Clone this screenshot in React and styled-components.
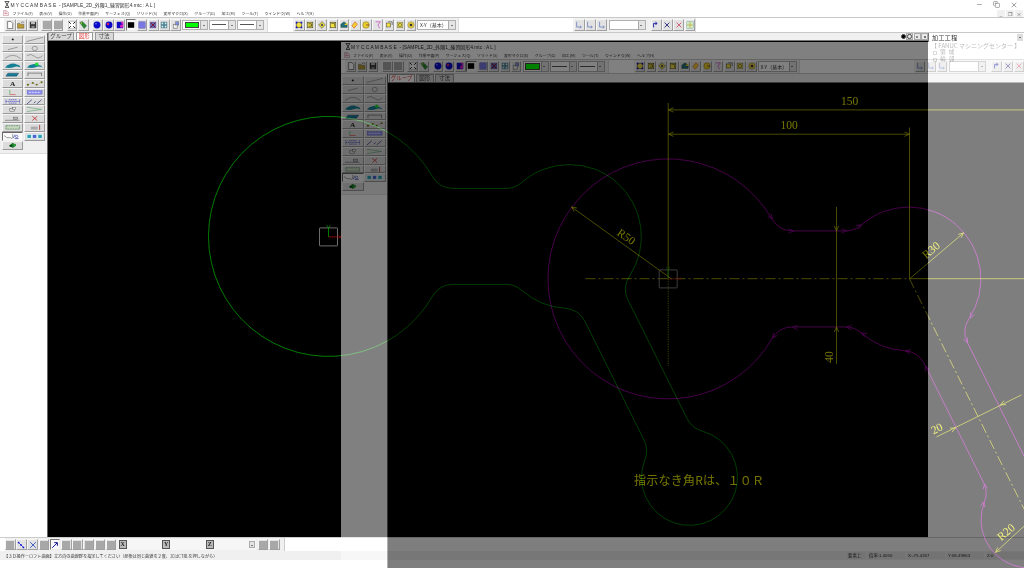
import React from 'react';
import styled, { createGlobalStyle } from 'styled-components';
import { Minus, Copy, X as CloseIcon } from 'lucide-react';

const Global = createGlobalStyle`
  html, body { margin: 0; padding: 0; background: #fff; overflow: hidden; }
  #root { width: 1024px; height: 568px; }
`;

const Stage = styled.div`
  position: relative; width: 1024px; height: 568px; overflow: hidden; background: #fff;
  filter: blur(0.4px);
  font-family: "Noto Sans CJK JP", "Liberation Sans", sans-serif;
`;
const Win = styled.div`
  width: 1024px; height: 568px; display: flex; flex-direction: column; background: #fff; color: #222;
`;
const Ghost = styled.div`
  position: absolute; left: 340.5px; top: 41.5px; width: 1024px; height: 568px; opacity: 0.5;
  box-shadow: inset 1px 1px 0 #666;
`;

const TitleBar = styled.div`
  height: 9px; display: flex; align-items: center; padding-left: 4px; position: relative;
`;
const TitleText = styled.span`
  font-size: 4.9px; color: #333; margin-left: 0.5px; white-space: pre; font-family: "Liberation Sans", "Noto Sans CJK JP", sans-serif;
`;
const WinControls = styled.div`
  position: absolute; right: 6px; top: 0; height: 9px; display: flex; gap: 10px; align-items: center; color: #333;
`;
const MenuBar = styled.div`
  height: 8px; display: flex; align-items: center; padding-left: 3px; position: relative;
`;
const MenuItems = styled.div`
  display: flex; gap: 6.4px; margin-left: 3.5px;
`;
const MenuItem = styled.span`
  font-size: 3.92px; line-height: 8px; color: #333; white-space: nowrap;
`;
const MdiControls = styled.div`
  position: absolute; right: 1px; top: 0.5px; display: flex; gap: 1px;
`;
const MdiBtn = styled.span`
  width: 8px; height: 7px; background: #f0f0f0; color: #555; font-size: 5px; line-height: 7px; text-align: center;
`;
const Toolbar = styled.div`
  height: 13.5px; display: flex; border-top: 1px solid #c8c8c8; border-bottom: 1px solid #c8c8c8; padding-left: 4px; background: #fff;
`;
const Segment = styled.div`
  display: flex; align-items: center; background: #f0f0f0; flex: none; width: ${p => p.$w}px; padding-left: 1px; box-sizing: border-box;
  margin-left: ${p => p.$ml || 0}px; border-right: 1px solid #ddd;
`;
const Group = styled.div`
  display: flex; gap: 0.6px; margin-left: ${p => p.$ml || 0}px; flex: none;
`;
const Btn = styled.div`
  width: 10.6px; height: 11.5px; box-sizing: border-box; background: ${p => p.$pressed ? '#f8f8f8' : '#e2e2e2'};
  border: 0.6px solid; border-color: ${p => p.$pressed ? '#777 #eee #eee #777' : '#f6f6f6 #a0a0a0 #a0a0a0 #f6f6f6'};
  display: flex; align-items: center; justify-content: center; flex: none;
  svg { width: 8px; height: 8px; display: block; }
`;
const Combo = styled.div`
  width: ${p => p.$w}px; height: 10.5px; box-sizing: border-box; background: #fff; margin-left: ${p => p.$ml || 0}px; border: 0.6px solid #b0b0b0;
  display: flex; align-items: center; padding-left: 1.5px; flex: none; font-size: 5px; color: #333; white-space: nowrap; overflow: hidden;
`;
const ComboBody = styled.div`
  flex: 1; min-width: 0; display: flex; align-items: center; overflow: hidden;
`;
const Swatch = styled.div`
  height: 6.5px; width: 100%; margin-right: 1px; background: #00ff00; border: 0.6px solid #444; box-sizing: border-box;
`;
const LineSample = styled.div`
  height: 0; width: 100%; margin-right: 2px; border-top: 0.8px solid #555;
`;
const ComboArrow = styled.div`
  width: 6px; align-self: stretch; flex: none; background: #e4e4e4; border-left: 0.5px solid #aaa; position: relative;
  &::after { content: ''; position: absolute; left: 1.5px; top: 4px; border: 1.4px solid transparent; border-top: 1.8px solid #111; }
`;
const Main = styled.div`
  flex: 1; min-height: 0; display: flex;
`;
const Side = styled.div`
  width: 46.5px; flex: none; border-right: 0.8px solid #666; box-sizing: content-box; background: #fff;
`;
const ToolGrid = styled.div`
  height: 121px; box-sizing: border-box; padding: 2.2px 1px 0 1.5px; background: #f0f0f0; border-bottom: 1px solid #ddd;
  display: grid; grid-template-columns: 21.5px 21.5px; grid-auto-rows: 8.85px; column-gap: 0.5px;
`;
const ToolBtn = styled.div`
  background: ${p => p.$pressed ? '#fafafa' : '#dcdcdc'};
  border: 0.5px solid; border-color: ${p => p.$pressed ? '#666 #eee #eee #666' : '#f5f5f5 #999 #999 #f5f5f5'};
  box-sizing: border-box; display: flex;
  svg { width: 100%; height: 100%; display: block; }
`;
const Center = styled.div`
  flex: 1; min-width: 0; display: flex; flex-direction: column;
`;
const TabRow = styled.div`
  height: 8.6px; background: #f0f0f0; display: flex; align-items: flex-end; flex: none; position: relative; padding-left: 0.5px; gap: 1.5px;
  border-bottom: 0.6px solid #777; box-sizing: border-box;
`;
const Tab = styled.div`
  width: ${p => p.$w}px; height: 8px; box-sizing: border-box; text-align: center; font-size: 5.5px; line-height: 7.5px; white-space: nowrap; overflow: hidden;
  background: ${p => p.$on ? '#fff' : '#d8d8d8'}; color: ${p => p.$on ? '#e04040' : '#444'};
  border: 0.6px solid #999; border-bottom: 0; border-radius: 1px 1px 0 0;
`;
const TabTools = styled.div`
  position: absolute; right: 0; top: 0.5px; display: flex; gap: 0.5px; align-items: center;
`;
const MiniToggle = styled.div`
  width: 7px; height: 7px; background: #e8e8e8; border: 0.5px solid #aaa; box-sizing: border-box; display: flex; align-items: center; justify-content: center;
`;
const Dot = styled.span`
  display: block; width: ${p => p.$s}px; height: ${p => p.$s}px; border-radius: 50%; background: ${p => p.$fill ? '#000' : 'transparent'}; border: 0.5px solid #444; box-sizing: border-box;
`;
const Canvas = styled.div`
  flex: 1; min-height: 0; background: #000;
  svg { width: 100%; height: 100%; display: block; }
`;
const RightPanel = styled.div`
  width: 96px; flex: none; background: #fff;
`;
const PanelCombo = styled.div`
  height: 8.5px; margin-top: 0.5px; display: flex; align-items: center; border-left: 0.6px solid #777; font-size: 6px; letter-spacing: 0.4px; padding-left: 3px; justify-content: space-between; color: #333;
`;
const PanelArrow = styled.span`
  width: 6px; height: 7px; margin-right: 1px; background: #ddd; position: relative;
  &::after { content: ''; position: absolute; left: 1.5px; top: 3px; border: 1.4px solid transparent; border-top: 1.8px solid #111; }
`;
const TreeRoot = styled.div`
  font-size: 6px; line-height: 7.5px; color: #777; padding-left: 3px; white-space: nowrap;
`;
const TreeItem = styled.div`
  font-size: 5.6px; line-height: 7px; letter-spacing: 1px; color: #777; padding-left: 5px; display: flex; align-items: center; gap: 3px;
`;
const TreePlus = styled.span`
  width: 4px; height: 4px; border: 0.5px solid #bbb; box-sizing: border-box;
`;
const BottomBar = styled.div`
  height: 14px; flex: none; display: flex; padding-left: 5px; box-sizing: border-box; border-top: 0.8px solid #ccc; background: #fff;
`;
const BottomSeg = styled.div`
  width: 280px; display: flex; align-items: center; background: #f0f0f0; border-right: 0.8px solid #ccc; box-sizing: border-box;
`;
const CoordField = styled.div`
  width: 138px; height: 10.5px; margin-left: 1.5px; display: flex; background: #f6f6f6; box-sizing: border-box; flex: none; align-items: center; position: relative; padding-left: 1px; gap: 35.5px;
`;
const CoordTag = styled.span`
  width: 8px; height: 8.5px; box-sizing: border-box; background: #bbb; border: 0.6px solid #555; font: bold 6px/7.5px "Liberation Serif", serif; text-align: center; color: #222; flex: none;
`;
const CoordArrow = styled.span`
  position: absolute; right: 1px; top: 1.5px; width: 6px; height: 7.5px; background: #e4e4e4; border: 0.4px solid #aaa; box-sizing: border-box;
  &::after { content: ''; position: absolute; left: 1.3px; top: 3px; border: 1.3px solid transparent; border-top: 1.6px solid #111; }
`;
const StatusBar = styled.div`
  height: 9px; flex: none; background: #f0f0f0; display: flex; align-items: center; padding-left: 4px;
`;
const StatusText = styled.span`
  font-size: 4.16px; color: #333; white-space: nowrap;
`;
const StatusFields = styled.div`
  margin-left: auto; display: flex; height: 100%; flex: none;
`;
const StatusField = styled.div`
  width: ${p => p.$w}px; margin-right: ${p => p.$mr || 0}px; font-size: 4.4px; line-height: 7.5px; height: 7.5px; align-self: center; background: #e8e8e8; padding-left: 1px; box-sizing: border-box; color: #333; white-space: nowrap; font-family: "Liberation Sans", "Noto Sans CJK JP", sans-serif;
`;
const Footer = styled.div`
  height: 8px; flex: none; background: #fff;
`;

/* ---------- toolbar icons ---------- */
const stroke = { fill: 'none', strokeWidth: 0.8 };
const yellowBox = c => <><rect x="1.5" y="1.5" width="7" height="7" fill="#f0e040" stroke="#222" strokeWidth="0.6" />{c}</>;
const TB = {
  file: <path d="M2 .6h4l2.4 2.4v6.4H2z" fill="#fff" stroke="#333" strokeWidth=".7" />,
  folder: <><path d="M.6 3h3l1 1h4v5H.6z" fill="#b89a30" stroke="#444" strokeWidth=".5" /><path d="M5 2l2-1 2 1" stroke="#333" fill="none" strokeWidth=".6" /></>,
  save: <><rect x="1" y="1" width="8" height="8" fill="#333" /><rect x="2.5" y="1" width="5" height="3" fill="#bbb" /><rect x="3" y="6" width="4" height="3" fill="#888" /></>,
  blank: <rect x="-1" y="-1" width="12" height="12" fill="#a8a8a8" />,
  fit: <><rect x="0.5" y="0.5" width="9" height="9" fill="#fff" stroke="#999" strokeWidth=".5" /><path d="M1 1l2.5 2.5M9 1L6.5 3.5M1 9l2.5-2.5M9 9L6.5 6.5" stroke="#111" strokeWidth="1.2" /></>,
  tag: <><path d="M1 2l3-1.5L9.5 6 6.5 9.5z" fill="#2a8a2a" stroke="#143" strokeWidth=".5" /><circle cx="3" cy="2.5" r=".8" fill="#dd3" /></>,
  sphere: <><circle cx="5" cy="5" r="4.3" fill="#0808c8" /><circle cx="3.7" cy="3.5" r="1" fill="#9090ff" /></>,
  sphereR: <><circle cx="5" cy="5" r="4.3" fill="#0808c8" /><circle cx="3.7" cy="3.7" r="1.6" fill="#e02060" /></>,
  shade: <><rect x="1" y="1" width="8" height="8" fill="#1010c0" /><path d="M5.5 1h3.5v5z" fill="#e020c0" /><circle cx="7" cy="6.5" r="2" fill="#e020c0" /></>,
  black: <rect x="1" y="1.5" width="8" height="7" fill="#000" />,
  blue: <><rect x="1" y="1" width="8" height="8" fill="#7878e0" stroke="#5050a0" strokeWidth=".5" /></>,
  xbox: <><rect x="1" y="1" width="8" height="8" fill="#6868b0" /><path d="M2 2l6 6M8 2l-6 6" stroke="#801030" strokeWidth="1.2" /></>,
  grid: <><rect x="1" y="1" width="8" height="8" fill="#508090" /><path d="M2 2h2v2H2zM6 2h2v2H6zM2 6h2v2H2zM6 6h2v2H6z" fill="#d0f0f0" /></>,
  stack: <><rect x="1.5" y="4" width="5" height="5" fill="#eee" stroke="#555" strokeWidth=".6" /><rect x="4.5" y="1" width="4" height="4" fill="#8090e0" stroke="#555" strokeWidth=".5" /></>,
  y1: yellowBox(<path d="M1 1h2v2H1zM7 1h2v2H7zM1 7h2v2H1zM7 7h2v2H7z" fill="#1010c0" />),
  y2: yellowBox(<path d="M3 3.5h4v3H3" {...stroke} stroke="#222" />),
  y3: <><path d="M5 .8L9.2 5 5 9.2.8 5z" fill="#f0e040" stroke="#333" strokeWidth=".6" /><circle cx="5" cy="5" r="1.5" fill="#555" /></>,
  y4: yellowBox(<path d="M3 3h4v4" {...stroke} stroke="#443" />),
  s1: <><path d="M1 4l4-3 4 3v4H1z" fill="#20707a" stroke="#222" strokeWidth=".4" /><path d="M5 5l4-3v3z" fill="#e8c820" /></>,
  s2: <><path d="M5 1l3 3-4 5-3-3z" fill="#f0d030" stroke="#d03020" strokeWidth=".6" /></>,
  s3: <><circle cx="5" cy="5" r="4" fill="#e8d030" stroke="#806000" strokeWidth=".6" /><path d="M5 5h4" stroke="#803030" strokeWidth="1" /></>,
  s4: <><path d="M2 1h6L5 5l2 4" fill="none" stroke="#d070d0" strokeWidth="1.2" /></>,
  s5: <><rect x="2" y="2.5" width="5" height="5" fill="#f0e040" stroke="#333" strokeWidth=".6" /><path d="M4 1h5v4" fill="none" stroke="#444" strokeWidth=".8" /></>,
  s6: <><rect x="1.5" y="1.5" width="7" height="7" fill="#f0e040" stroke="#666" strokeWidth=".6" /><rect x="3.5" y="3.5" width="3" height="3" fill="none" stroke="#333" strokeWidth=".6" /></>,
  s7: <><circle cx="5" cy="5" r="4" fill="#f0d840" stroke="#555" strokeWidth=".5" /><rect x="3.5" y="3.5" width="3" height="3" fill="#333" /></>,
  l1: <path d="M2 1v6.5h5.5M6 6l2 1.5-2 1.5" fill="none" stroke="#7080c0" strokeWidth="1" />,
  nav: <path d="M1.5 8.5L7.5 2.5M4 2h4v4" fill="none" stroke="#101090" strokeWidth="1.2" />,
  cross: <path d="M1.5 1.5l7 7M8.5 1.5l-7 7" stroke="#2040c0" strokeWidth="1" />,
  redx: <path d="M2 2l6 6M8 2l-6 6" stroke="#d04060" strokeWidth="1" />,
  gridGreen: <><rect x="1" y="1" width="8" height="8" fill="#cfe8c0" stroke="#7aa" strokeWidth=".5" /><path d="M5 1v8M1 5h8" stroke="#c0a020" strokeWidth=".7" /></>,
  points: <><path d="M2 2l6 6" stroke="#1010c0" strokeWidth=".8" /><circle cx="2" cy="2" r="1.1" fill="#1010e0" /><circle cx="8" cy="8" r="1.1" fill="#1010e0" /><circle cx="5" cy="5" r="1.1" fill="#1010e0" /></>,
  xcross: <path d="M2 2l6 6M8 2l-6 6" stroke="#303080" strokeWidth="1.2" />,
  arrowUp: <path d="M2 8V3h4l-1.5-2M6 3L4.5 5" fill="none" stroke="#1010a0" strokeWidth="1.1" />,
};
const Ico = ({ k, pressed }) => (
  <Btn $pressed={pressed}><svg viewBox="0 0 10 10">{TB[k]}</svg></Btn>
);
const Icons = ({ list, ml, pressed }) => (
  <Group $ml={ml}>{list.map((k, i) => <Ico key={i} k={k} pressed={k === pressed} />)}</Group>
);

/* ---------- side tool icons ---------- */
const g = '#777';
const SIDE = [
  <circle cx="10" cy="4" r="1" fill="#111" />,
  <path d="M1.5 6.5L18.5 1.5" stroke={g} strokeWidth=".7" />,
  <path d="M5 5.5L15 2.5" stroke={g} strokeWidth=".7" />,
  <circle cx="10" cy="4" r="2.6" fill="none" stroke={g} strokeWidth=".7" />,
  <path d="M2 6.5Q10-1 18 6.5" fill="none" stroke={g} strokeWidth=".7" />,
  <path d="M2 3Q6 0 10 4t8-1" fill="none" stroke={g} strokeWidth=".7" />,
  <path d="M2 6.5Q4 3 8 2t6 1q3 0 4 3.5q-4-2-7-.5T2 6.5z" fill="#157f95" />,
  <><path d="M2 6.5Q4 3 8 2.5t6 1q3 0 4 3q-4-2-7-.5T2 6.5z" fill="#157f95" /><circle cx="12" cy="2.5" r="1.8" fill="#22dd33" /></>,
  <><path d="M5 2.5h11l-2 3.5H3z" fill="#157f95" stroke="#124" strokeWidth=".4" /></>,
  <path d="M3 2v4M17 2v4M3 2.5h14" fill="none" stroke="#555" strokeWidth=".7" />,
  <text x="10" y="6.8" fontSize="7.5" fontWeight="700" textAnchor="middle" fill="#222" fontFamily="Liberation Serif, serif">A</text>,
  <><path d="M2 6l5-2.5 5 2 6-3.5" fill="none" stroke="#777" strokeWidth=".4" strokeDasharray="1 1" /><circle cx="3" cy="5.6" r="1.1" fill="#6a6a10" /><circle cx="8" cy="3.4" r="1.1" fill="#6a6a10" /><circle cx="12" cy="5.4" r="1.1" fill="#6a6a10" /><circle cx="17" cy="2.6" r="1.1" fill="#6a6a10" /></>,
  <><path d="M7 1v5.5" fill="none" stroke="#40b040" strokeWidth=".7" /><path d="M7 6.5h6" stroke="#e04040" strokeWidth=".7" /></>,
  <><rect x="2.5" y="2" width="15" height="4" fill="#9090f0" stroke="#5050c0" strokeWidth=".5" /><path d="M4 4h12" stroke="#fff" strokeWidth=".7" strokeDasharray="2 1" /></>,
  <><path d="M3 1.5v5M17 1.5v5M3 4h14M6 2h8M6 6h8" fill="none" stroke="#5050c0" strokeWidth=".8" strokeDasharray="1.6 .5" /></>,
  <path d="M2 7l5-5M9 6l2-2M12 7l5-5" fill="none" stroke="#303080" strokeWidth=".8" />,
  <><rect x="7" y="3" width="5" height="3.5" fill="#ddd" stroke="#555" strokeWidth=".5" /><rect x="10" y="1.5" width="3" height="2.5" fill="#eee" stroke="#555" strokeWidth=".5" /></>,
  <path d="M2 1.5L17 4 2 6.5" fill="none" stroke="#60a870" strokeWidth=".7" />,
  <><path d="M2 6.2h15" stroke="#666" strokeWidth=".7" /><rect x="11" y="2.5" width="4" height="3" fill="#bbb" stroke="#555" strokeWidth=".5" /></>,
  <path d="M7.5 1.5l5 5M12.5 1.5l-5 5" stroke="#c03030" strokeWidth=".9" />,
  <><rect x="3" y="2" width="14" height="4" fill="#c8d8c0" stroke="#2a6a3a" strokeWidth=".6" strokeDasharray="2 .6" /></>,
  <><rect x="6" y="3" width="7" height="3.5" fill="#aaa" /><path d="M15 1v6" stroke="#a03030" strokeWidth=".9" /></>,
  <><path d="M1 3l3 2.5h4M10 1v4q0 1.5-2 1.5" fill="none" stroke="#555" strokeWidth=".6" /><path d="M10.5 6l2-4M12 6.5h4" stroke="#2030a0" strokeWidth=".7" /><circle cx="14" cy="4" r="1.3" fill="none" stroke="#2030a0" strokeWidth=".6" /></>,
  <><rect x="1.5" y="1.5" width="17" height="5" fill="#d8f0f8" /><rect x="2.5" y="2.2" width="3.6" height="3.6" fill="#2aa0b0" /><rect x="8" y="2.2" width="3.6" height="3.6" fill="#5060d0" /><rect x="13.6" y="2.2" width="3.6" height="3.6" fill="#2aa0b0" /></>,
  <><path d="M6.5 4l3.5-3 3.5 3-3.5 3z" fill="#1a7a2a" /><circle cx="8" cy="4.5" r="1.4" fill="#0a4a1a" /><circle cx="12" cy="3.5" r="1.4" fill="#2a9a3a" /></>,
];

/* ---------- CAD drawing, authored in page coordinates ---------- */
const PROFILE = 'M103.9 -60A24 24 0 0 0 124.7 -48L177.5 -48A24 24 0 0 0 193.4 -54A72 72 0 0 1 301 39.75A24 24 0 0 0 299.5 63.7L358.6 182.3A24 24 0 0 0 373.7 194.7A48 48 0 1 1 316.4 223.3A24 24 0 0 0 315.6 203.7L256.5 85.1A24 24 0 0 0 236.5 71.85A72 72 0 0 1 193.4 54A24 24 0 0 0 177.5 48L124.7 48A24 24 0 0 0 103.9 60A120 120 0 1 1 103.9 -60Z';

const Origin = ({ x, y, box }) => (
  <g transform={`translate(${x} ${y})`} fill="none">
    <rect x="-9" y="-9" width="18" height="18" rx=".6" stroke={box} strokeWidth=".8" />
    <path d="M0 0V-9" stroke="#00b000" strokeWidth=".7" />
    <path d="M-2 -12l2 3 2-3" stroke="#00b000" strokeWidth=".6" />
    <path d="M0 0H10" stroke="#c01010" strokeWidth=".7" />
    <path d="M10 -1.5l3 3M13 -1.5l-3 3" stroke="#c01010" strokeWidth=".6" />
  </g>
);

const Chev = ({ x, y, a, c }) => (
  <path d="M-5 -2.2L0 0L-5 2.2" fill="none" stroke={c} strokeWidth=".7" transform={`translate(${x} ${y}) rotate(${a})`} />
);
const PINK_ARROWS = [
  [772, 218, 50], [793, 230, 0], [846, 230, 0], [861, 224, -30], [970, 317, 115], [967, 342, 65],
  [984, 483, -100], [983, 501, -80], [792, 326.5, 180], [846, 326.5, 180], [861, 332, 210], [905, 350, 190], [925, 365, 250], [772, 337, 130],
];
const Y = '#d8d800';
const DimText = styled.text`
  font-family: "Liberation Serif", serif; font-size: ${p => p.$s || 11.5}px; fill: #e8e800;
`;
const Note = styled.text`
  font-family: "Noto Sans CJK JP", sans-serif; font-size: 12px; fill: #e8e800; letter-spacing: 0.25px;
`;

const BaseDrawing = () => (
  <g transform="translate(-47 -40.6)" fill="none">
    <path d={PROFILE} transform="translate(327.5 236)" stroke="#009c00" strokeWidth=".8" />
    <Origin x={327.5} y={236.5} box="#888" />
  </g>
);
const GhostDrawing = () => (
  <g transform="translate(-387.5 -82.1)" fill="none">
    <path d={PROFILE} transform="translate(667.5 278)" stroke="#b000b8" strokeWidth=".8" />
    {PINK_ARROWS.map(([x, y, a], i) => <Chev key={i} x={x} y={y} a={a} c="#b000b8" />)}
    <g stroke={Y} strokeWidth=".7">
      <path d="M667.7 102V278" />
      <path d="M667.7 278V365" strokeDasharray="1.2 1.2" strokeWidth=".6" />
      <path d="M668 109H1030M668 133.3H909M909 126.7V278" />
      <path d="M585 277.8H909" strokeDasharray="10 3 2 3" />
      <path d="M909 277.8H1030" />
      <path d="M836 206V363" />
      <path d="M909 278L1030 521" strokeDasharray="10 3 2 3" />
      <path d="M671 278L571 206M909 278L963 232M936 436L1021 394M995 551.5L1026 523" />
    </g>
    <Chev x={668} y={109} a={180} c={Y} />
    <Chev x={668} y={133.3} a={180} c={Y} />
    <Chev x={909} y={133.3} a={0} c={Y} />
    <Chev x={571} y={206} a={216} c={Y} />
    <Chev x={963} y={232} a={-40} c={Y} />
    <Chev x={836} y={230} a={90} c={Y} />
    <Chev x={836} y={326} a={-90} c={Y} />
    <Chev x={955} y={427} a={-27} c={Y} />
    <Chev x={1000} y={404} a={153} c={Y} />
    <Chev x={995} y={551.5} a={137} c={Y} />
    <Origin x={667.7} y={278} box="#999" />
    <DimText x="849" y="104.5" textAnchor="middle">150</DimText>
    <DimText x="788.5" y="128.5" textAnchor="middle">100</DimText>
    <DimText textAnchor="middle" transform="translate(623.5 239) rotate(35)">R50</DimText>
    <DimText textAnchor="middle" transform="translate(933 252) rotate(-41)">R30</DimText>
    <DimText textAnchor="middle" transform="translate(832 356) rotate(-90)">40</DimText>
    <DimText textAnchor="middle" transform="translate(938 431) rotate(-27)">20</DimText>
    <DimText textAnchor="middle" transform="translate(1008 534) rotate(-41)">R20</DimText>
    <Note x="633.5" y="484">指示なき角Rは、１０Ｒ</Note>
  </g>
);

const MENU = ['ファイル(F)', '表示(V)', '操作(O)', '作業平面(P)', 'サーフェス(Q)', 'ソリッド(S)', '変形マクロ(X)', 'グループ(G)', '加工(M)', 'ツール(T)', 'ウィンドウ(W)', 'ヘルプ(H)'];

const Logo = () => (
  <svg width="6" height="7" viewBox="0 0 9 8" preserveAspectRatio="none"><path d="M1 .5h7M1.5 7.5h6M2 1l5 6M7 1L2 7" stroke="#222" strokeWidth="1" fill="none" /></svg>
);
const MenuGlyph = () => (
  <svg width="6" height="6" viewBox="0 0 6 6"><path d="M.5 .5h3l2 2v3h-5z" fill="#f6f0f0" stroke="#c08090" strokeWidth=".5" /><path d="M1.5 2h2M1.5 3.5h3" stroke="#c04060" strokeWidth=".5" /></svg>
);
const LineCombo = ({ w, ml }) => (
  <Combo $w={w} $ml={ml}><ComboBody><LineSample /></ComboBody><ComboArrow /></Combo>
);

/* `offscreen` holds the parts of a window that fall outside the page when it is
   dragged to the right and down, as the ghost window is. */
const AppWindow = ({ activeTab, children, offscreen = true }) => (
  <Win>
    <TitleBar>
      <Logo />
      <TitleText>{'M Y C C A M B A S E  - [SAMPLE_2D_外隈1_練習図形4.mtc : A L ]'}</TitleText>
      {offscreen && (
        <WinControls>
          <Minus size={7} strokeWidth={1.4} />
          <Copy size={7} strokeWidth={1.4} />
          <CloseIcon size={8} strokeWidth={1.4} />
        </WinControls>
      )}
    </TitleBar>
    <MenuBar>
      <MenuGlyph />
      <MenuItems>{MENU.map(m => <MenuItem key={m}>{m}</MenuItem>)}</MenuItems>
      {offscreen && <MdiControls><MdiBtn>_</MdiBtn><MdiBtn>❐</MdiBtn><MdiBtn>×</MdiBtn></MdiControls>}
    </MenuBar>
    <Toolbar>
      <Segment $w={264}>
        <Icons list={['file', 'folder', 'save']} />
        <Icons ml={3.5} list={['blank', 'blank']} />
        <Icons ml={3.5} list={['fit', 'tag']} />
        <Icons ml={3.5} pressed="black" list={['sphere', 'sphereR', 'shade', 'black', 'blue', 'xbox', 'grid', 'stack']} />
        <Combo $w={26} $ml={1.5}><ComboBody><Swatch /></ComboBody><ComboArrow /></Combo>
        <LineCombo w={27} ml={1} />
        <LineCombo w={27} ml={1} />
      </Segment>
      <Segment $w={166} $ml={25}>
        <Icons list={['y1', 'y2', 'y3', 'y4', 's1', 's2', 's3', 's4', 's5', 's6', 's7']} />
        <Combo $w={39} $ml={1}><ComboBody>X-Y（基本）</ComboBody><ComboArrow /></Combo>
      </Segment>
      <Segment $w={123} $ml={114}>
        <Icons list={['l1', 'l1', 'l1']} />
        <Combo $w={37} $ml={2}><ComboBody /><ComboArrow /></Combo>
        <Icons ml={5} list={['arrowUp', 'xcross', 'redx', 'gridGreen']} />
      </Segment>
    </Toolbar>
    <Main>
      <Side>
        <ToolGrid>
          {SIDE.map((s, i) => <ToolBtn key={i} $pressed={i === 22}><svg viewBox="0 0 20 8" preserveAspectRatio="none">{s}</svg></ToolBtn>)}
        </ToolGrid>
      </Side>
      <Center>
        <TabRow>
          <Tab $w={26} $on={activeTab === 0}>グループ</Tab>
          <Tab $w={17.5} $on={activeTab === 1}>図形</Tab>
          <Tab $w={19} $on={activeTab === 2}>寸法</Tab>
          {offscreen && (
            <TabTools>
              <Dot $s={5} $fill />
              <MiniToggle><Dot $s={4.5} /></MiniToggle>
              <MiniToggle><Dot $s={1.5} /></MiniToggle>
              <MiniToggle><Dot $s={1.5} $fill /></MiniToggle>
            </TabTools>
          )}
        </TabRow>
        <Canvas>
          <svg>{children}</svg>
        </Canvas>
      </Center>
      <RightPanel>
        {offscreen && (
          <>
            <PanelCombo>加工工程<PanelArrow /></PanelCombo>
            <TreeRoot>【 FANUC マシニングセンター 】</TreeRoot>
            <TreeItem><TreePlus />領 域</TreeItem>
            <TreeItem><TreePlus />輪 郭</TreeItem>
          </>
        )}
      </RightPanel>
    </Main>
    <BottomBar>
      {offscreen && (
        <BottomSeg>
          <Icons list={['blank', 'points', 'cross', 'blank', 'nav', 'blank', 'blank', 'blank', 'blank', 'blank']} pressed="nav" />
          <CoordField>
            <CoordTag>X</CoordTag><CoordTag>Y</CoordTag><CoordTag>Z</CoordTag><CoordArrow />
          </CoordField>
          <Icons ml={2} list={['blank', 'blank']} />
        </BottomSeg>
      )}
    </BottomBar>
    <StatusBar>
      {offscreen && (
        <>
          <StatusText>【３Ｄ操作ーロフト曲面】立方向の曲線群を指定してください（最後は同じ曲線を２度、又はCTRLを押しながら）</StatusText>
          <StatusFields>
            <StatusField $w={18} $mr={3}>要素上</StatusField>
            <StatusField $w={37} $mr={2}>倍率:1.4056</StatusField>
            <StatusField $w={38} $mr={2}>X:-75.4267</StatusField>
            <StatusField $w={37} $mr={2}>Y:68.49863</StatusField>
            <StatusField $w={38}>Z:0</StatusField>
          </StatusFields>
        </>
      )}
    </StatusBar>
    <Footer />
  </Win>
);

export default function App() {
  return (
    <Stage>
      <Global />
      <AppWindow activeTab={1}><BaseDrawing /></AppWindow>
      <Ghost>
        <AppWindow activeTab={0} offscreen={false}><GhostDrawing /></AppWindow>
      </Ghost>
    </Stage>
  );
}
